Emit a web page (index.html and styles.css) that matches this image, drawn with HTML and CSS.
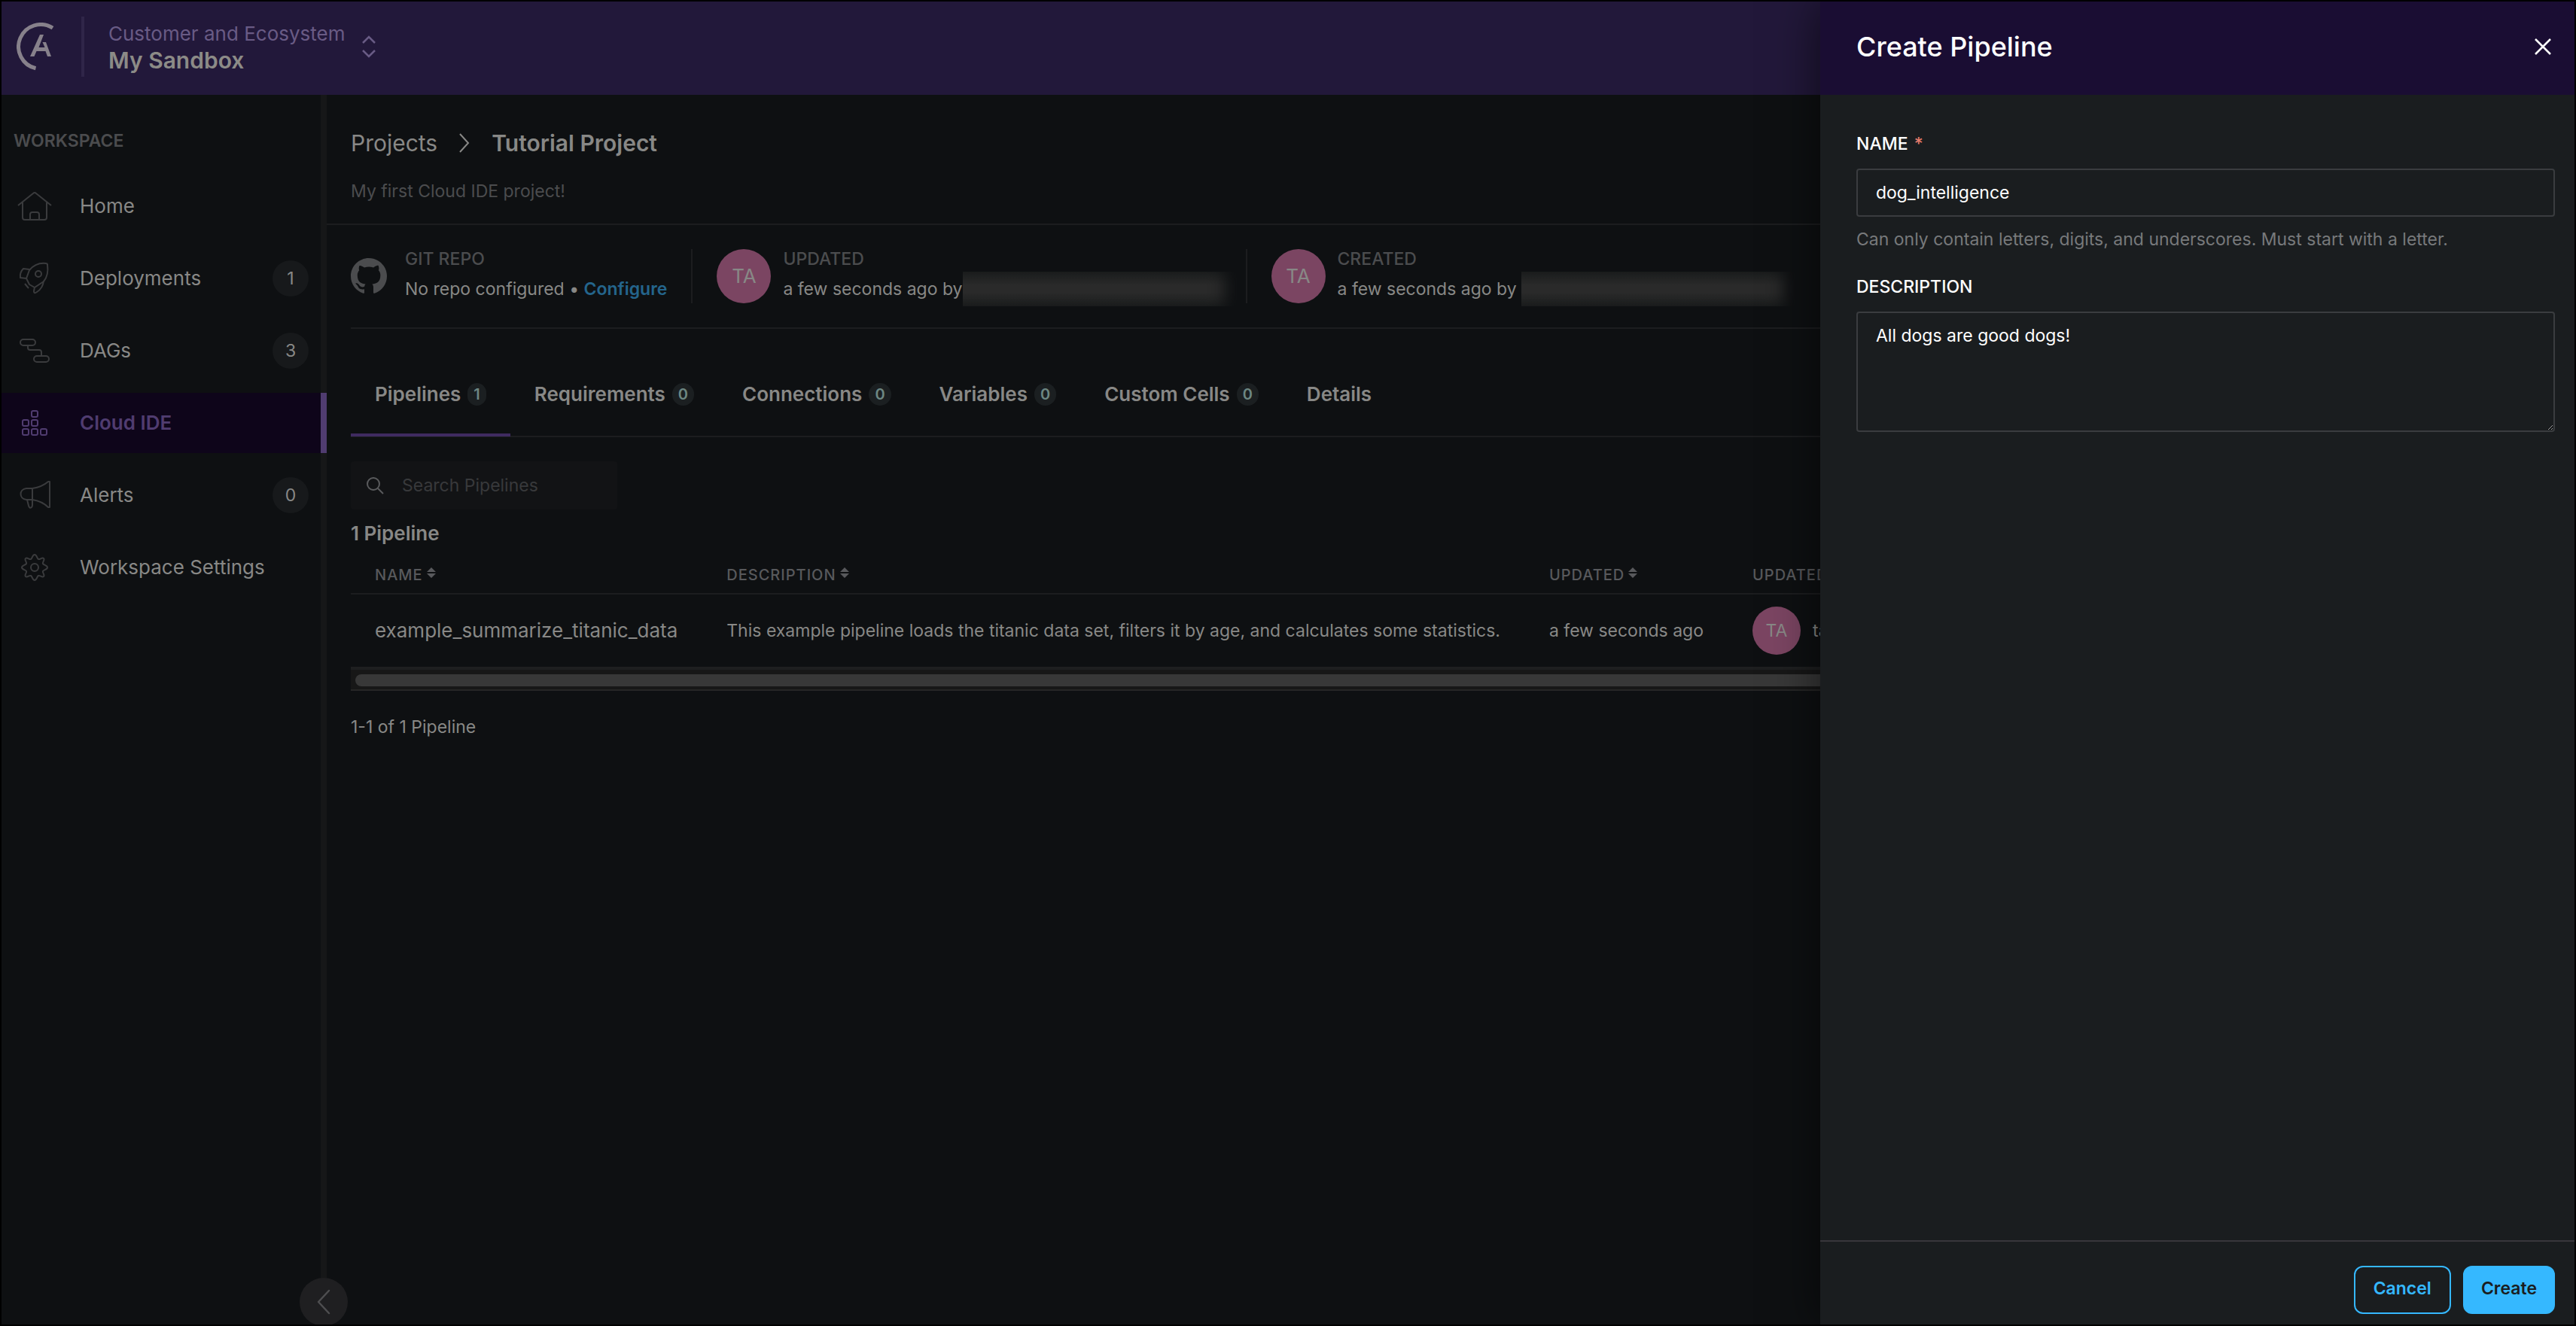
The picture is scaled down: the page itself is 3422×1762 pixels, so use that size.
FILE: index.html
```html
<!doctype html>
<html lang="en">
  <head>
    <meta charset="UTF-8" />
    <meta name="viewport" content="width=device-width, initial-scale=1.0" />
    <title>Create Pipeline - Tutorial Project</title>
    <link rel="stylesheet" href="styles.css">
  </head>
  <body>
    <div class="app">
      <header class="topbar">
        <a class="logo" href="#" aria-label="Astro">
          <svg width="50" height="64" viewBox="0 0 50 64" fill="none" stroke="currentColor">
            <path d="M48 7.2A29.5 29.5 0 1 0 25.5 60.8" stroke-width="5" />
            <path d="M18 45 31 16H36L29.5 33H37.5L34.5 26H39L46 45H41L38.5 38H26.5L23.5 45z" fill="currentColor" stroke="none" />
          </svg>
        </a>
        <button type="button" class="switcher">
          <span class="switcher-text">
            <span class="org">Customer and Ecosystem</span>
            <span class="workspace">My Sandbox</span>
          </span>
          <svg width="20" height="30" viewBox="0 0 20 30" fill="none" stroke="currentColor" stroke-width="2.5">
            <path d="M2 10 10 2 18 10M2 20 10 28 18 20" />
          </svg>
        </button>
      </header>

      <div class="columns">
        <nav class="sidebar">
          <h2 class="sidebar-title">WORKSPACE</h2>
          <a class="nav-item" href="#">
            <svg class="nav-icon" viewBox="0 0 48 48">
              <path d="M2 23 22 7q2-2 4 0L46 23M8 19v20q0 3 3 3h26q3 0 3-3V19M18 42v-7q0-3 3-3h6q3 0 3 3v7" />
            </svg>
            <span class="nav-label">Home</span>
          </a>
          <a class="nav-item" href="#">
            <svg class="nav-icon" viewBox="0 0 48 48">
              <path d="M17 32 24 36 36 28C41 22 42 13 41 6q0-2-2-2C30 3 22 7 17 13L13 24zM17 12 9 11Q4 16 5 23L13 24 17 32M24 35 23 41Q23 45 27 42 35 37 36 27M11 31 16 37" />
              <circle cx="29" cy="18" r="4" />
            </svg>
            <span class="nav-label">Deployments</span>
            <span class="nav-count">1</span>
          </a>
          <a class="nav-item" href="#">
            <svg class="nav-icon" viewBox="0 0 48 48">
              <rect x="5" y="9" width="20" height="8" rx="4" />
              <rect x="23" y="31" width="20" height="8" rx="4" />
              <path d="M15 17v3q0 3 3 3h12q3 0 3 3v5" />
            </svg>
            <span class="nav-label">DAGs</span>
            <span class="nav-count">3</span>
          </a>
          <a class="nav-item active" href="#">
            <svg class="nav-icon" viewBox="0 0 48 48">
              <rect x="20" y="8" width="8" height="8" rx="2" />
              <rect x="8" y="20" width="8" height="8" rx="2" />
              <rect x="20" y="20" width="8" height="8" rx="2" />
              <rect x="8" y="32" width="8" height="8" rx="2" />
              <rect x="20" y="32" width="8" height="8" rx="2" />
              <rect x="32" y="32" width="8" height="8" rx="2" />
            </svg>
            <span class="nav-label">Cloud IDE</span>
          </a>
          <a class="nav-item" href="#">
            <svg class="nav-icon" viewBox="0 0 48 48">
              <path d="M21 15H13C3 16 3 29 13 30H21ZM21 15Q34 13 42 6h2V40H42Q34 32 21 30M14 30 16 38q1 4 4 2 1-1 1-3V30" />
            </svg>
            <span class="nav-label">Alerts</span>
            <span class="nav-count">0</span>
          </a>
          <a class="nav-item" href="#">
            <svg class="nav-icon" viewBox="0 0 48 48">
              <path d="M24 7C27 7 27 12 29 13 31 14 34 10 36 12 38 14 34 17 35 19 36 21 41 21 41 24 41 27 36 27 35 29 34 31 38 34 36 36 34 38 31 34 29 35 27 36 27 41 24 41 21 41 21 36 19 35 17 34 14 38 12 36 10 34 14 31 13 29 12 27 7 27 7 24 7 21 12 21 13 19 14 17 10 14 12 12 14 10 17 14 19 13 21 12 21 7 24 7Z" />
              <circle cx="24" cy="24" r="5" />
            </svg>
            <span class="nav-label">Workspace Settings</span>
          </a>
        </nav>

        <main class="main">
          <div class="page-head">
            <div class="breadcrumb">
              <a href="#">Projects</a>
              <svg width="14" height="26" viewBox="0 0 14 26" fill="none" stroke="currentColor" stroke-width="2">
                <path d="M1 1 12 13 1 25" />
              </svg>
              <h1>Tutorial Project</h1>
            </div>
            <p>My first Cloud IDE project!</p>
          </div>

          <div class="content">
            <div class="stats">
              <div class="stat stat-repo">
                <svg class="github" viewBox="0 0 16 16" fill="currentColor">
                  <path d="M8 0C3.58 0 0 3.58 0 8c0 3.54 2.29 6.53 5.47 7.59.4.07.55-.17.55-.38 0-.19-.01-.82-.01-1.49-2.01.37-2.53-.49-2.69-.94-.09-.23-.48-.94-.82-1.13-.28-.15-.68-.52-.01-.53.63-.01 1.08.58 1.23.82.72 1.21 1.87.87 2.33.66.07-.52.28-.87.51-1.07-1.78-.2-3.64-.89-3.64-3.95 0-.87.31-1.59.82-2.15-.08-.2-.36-1.02.08-2.12 0 0 .67-.21 2.2.82.64-.18 1.32-.27 2-.27s1.36.09 2 .27c1.53-1.04 2.2-.82 2.2-.82.44 1.1.16 1.92.08 2.12.51.56.82 1.27.82 2.15 0 3.07-1.87 3.75-3.65 3.95.29.25.54.73.54 1.48 0 1.07-.01 1.93-.01 2.2 0 .21.15.46.55.38A8.01 8.01 0 0 0 16 8c0-4.42-3.58-8-8-8z" />
                </svg>
                <div class="stat-text">
                  <h3>GIT REPO</h3>
                  <p>No repo configured • <a href="#">Configure</a></p>
                </div>
              </div>
              <div class="stat">
                <span class="avatar">TA</span>
                <div class="stat-text">
                  <h3>UPDATED</h3>
                  <p>a few seconds ago by<span class="redacted"></span></p>
                </div>
              </div>
              <div class="stat">
                <span class="avatar">TA</span>
                <div class="stat-text">
                  <h3>CREATED</h3>
                  <p>a few seconds ago by <span class="redacted"></span></p>
                </div>
              </div>
            </div>

            <div class="tabs">
              <a class="tab active" href="#">Pipelines <span class="tab-count">1</span></a>
              <a class="tab" href="#">Requirements <span class="tab-count">0</span></a>
              <a class="tab" href="#">Connections <span class="tab-count">0</span></a>
              <a class="tab" href="#">Variables <span class="tab-count">0</span></a>
              <a class="tab" href="#">Custom Cells <span class="tab-count">0</span></a>
              <a class="tab" href="#">Details</a>
            </div>

            <label class="search">
              <svg width="24" height="24" viewBox="0 0 24 24" fill="none" stroke="currentColor" stroke-width="2">
                <circle cx="10" cy="10" r="8" />
                <path d="M16 16 23 23" />
              </svg>
              <input type="search" placeholder="Search Pipelines" aria-label="Search Pipelines" />
            </label>

            <h2 class="table-title">1 Pipeline</h2>
            <div class="table-wrap">
              <table>
                <thead>
                  <tr>
                    <th>NAME<svg class="sort" viewBox="0 0 12 14"><path d="M6 0 12 6H0zM0 8H12L6 14z" /></svg></th>
                    <th>DESCRIPTION<svg class="sort" viewBox="0 0 12 14"><path d="M6 0 12 6H0zM0 8H12L6 14z" /></svg></th>
                    <th>UPDATED<svg class="sort" viewBox="0 0 12 14"><path d="M6 0 12 6H0zM0 8H12L6 14z" /></svg></th>
                    <th>UPDATED BY</th>
                  </tr>
                </thead>
                <tbody>
                  <tr>
                    <td class="name">example_summarize_titanic_data</td>
                    <td>This example pipeline loads the titanic data set, filters it by age, and calculates some statistics.</td>
                    <td>a few seconds ago</td>
                    <td><div class="user"><span class="avatar small">TA</span>ta</div></td>
                  </tr>
                </tbody>
              </table>
            </div>
            <div class="scrollbar"><div class="thumb"></div></div>
            <p class="pagination">1-1 of 1 Pipeline</p>
          </div>
        </main>
      </div>

      <button type="button" class="collapse" aria-label="Collapse sidebar">
        <svg width="18" height="34" viewBox="0 0 18 34" fill="none" stroke="currentColor" stroke-width="2.5" stroke-linecap="round" stroke-linejoin="round">
          <path d="M16 2 2 17 16 32" />
        </svg>
      </button>

      <form class="drawer">
        <div class="drawer-head">
          <h2>Create Pipeline</h2>
          <button type="button" class="close" aria-label="Close">
            <svg width="22" height="22" viewBox="0 0 22 22" fill="none" stroke="currentColor" stroke-width="2.5">
              <path d="M1 1 21 21M21 1 1 21" />
            </svg>
          </button>
        </div>
        <div class="drawer-body">
          <label class="field-label" for="name">NAME <span class="required">*</span></label>
          <input class="field" type="text" id="name" value="dog_intelligence" />
          <p class="help">Can only contain letters, digits, and underscores. Must start with a letter.</p>
          <label class="field-label" for="description">DESCRIPTION</label>
          <textarea class="field" id="description">All dogs are good dogs!</textarea>
        </div>
        <div class="drawer-foot">
          <button type="button" class="btn">Cancel</button>
          <button type="submit" class="btn primary">Create</button>
        </div>
      </form>
    </div>
  </body>
</html>
```

FILE: styles.css
```css
* {
  box-sizing: border-box;
}

html,
body {
  margin: 0;
  height: 100%;
}

body {
  padding: 2px;
  background: #000;
  color: #888886;
  color-scheme: dark;
  font: 23px/32px Inter, sans-serif;
}

h1,
h2,
h3,
p {
  margin: 0;
  font-size: inherit;
}

a {
  color: inherit;
  text-decoration: none;
}

button,
input,
textarea {
  margin: 0;
  border: 0;
  background: none;
  color: inherit;
  font: inherit;
}

.app {
  position: relative;
  display: flex;
  flex-direction: column;
  height: 100%;
  overflow: hidden;
  background: #0e1012;
}

/* Top bar */
.topbar {
  display: flex;
  align-items: center;
  height: 124px;
  padding: 0 0 4px 20px;
  background: #22183a;
}

.logo {
  display: flex;
  padding-right: 36px;
  color: #87818b;
}

.switcher {
  display: flex;
  align-items: center;
  gap: 22px;
  height: 80px;
  padding: 0 0 0 32px;
  border-left: 4px solid #2f2548;
  color: #695b85;
}

.switcher-text {
  display: flex;
  flex-direction: column;
  text-align: left;
}

.org {
  font-size: 26px;
  line-height: 36px;
}

.workspace {
  color: #8c8b87;
  font-size: 30px;
  font-weight: 600;
  line-height: 34px;
}

/* Sidebar */
.columns {
  display: flex;
  flex: 1;
  min-height: 0;
}

.sidebar {
  display: flex;
  flex: none;
  flex-direction: column;
  gap: 16px;
  width: 432px;
  padding-top: 45px;
  border-right: 8px solid #161718;
}

.sidebar-title {
  padding: 0 16px 15px;
  color: #4b4c4e;
  font-weight: 600;
}

.nav-item {
  display: flex;
  align-items: center;
  height: 80px;
  margin-right: -8px;
  padding: 0 24px 0 20px;
  font-size: 26px;
}

.nav-item.active {
  border-right: 8px solid #503c70;
  background: #0e051a;
  color: #503c70;
  font-weight: 600;
}

.nav-icon {
  width: 48px;
  height: 48px;
  margin-right: 36px;
  fill: none;
  stroke: #3a3b3d;
  stroke-width: 2;
  stroke-linejoin: round;
}

.nav-item.active .nav-icon {
  stroke: currentColor;
}

.nav-label {
  flex: 1;
}

.nav-count {
  width: 48px;
  border-radius: 24px;
  background: #17191b;
  font-size: 23px;
  line-height: 48px;
  text-align: center;
}

.collapse {
  position: absolute;
  bottom: -2px;
  left: 396px;
  display: grid;
  place-items: center;
  width: 64px;
  height: 64px;
  padding: 0;
  border-radius: 50%;
  background: #1f1f21;
  color: #4e4e50;
}

/* Project page */
.main {
  flex: 1;
  min-width: 0;
}

.page-head {
  padding: 44px 32px 27px;
  border-bottom: 2px solid #1c1d1f;
}

.page-head p {
  margin-top: 28px;
  color: #4b4c4e;
}

.breadcrumb {
  display: flex;
  align-items: center;
  gap: 29px;
  font-size: 30px;
  line-height: 40px;
}

.breadcrumb h1 {
  font-weight: 600;
}

.content {
  padding-left: 32px;
}

.stats {
  display: flex;
  padding: 32px 0;
  border-bottom: 2px solid #1c1d1f;
}

.stat {
  display: flex;
  gap: 16px;
  padding: 0 32px;
}

.stat + .stat {
  border-left: 2px solid #1c1d1f;
}

.stat-repo {
  gap: 24px;
  padding-left: 0;
}

.stat-text {
  line-height: 26px;
}

.stat-text h3 {
  margin-bottom: 14px;
  color: #4b4c4e;
  font-weight: 500;
}

.stat-text p {
  display: flex;
  align-items: center;
  white-space: pre;
}

.stat-text a {
  color: #24658c;
  font-weight: 600;
}

.github {
  align-self: center;
  width: 48px;
  height: 48px;
  color: #4b4c4e;
}

.avatar {
  flex: none;
  width: 72px;
  border-radius: 50%;
  background: #7b4562;
  font-size: 26px;
  line-height: 72px;
  text-align: center;
}

.avatar.small {
  width: 64px;
  font-size: 23px;
  line-height: 64px;
}

.redacted {
  width: 364px;
  height: 46px;
  margin: -10px -20px -10px 0;
  background: linear-gradient(#1d1f1f, #2a2a2a 40%, #2a2a2a 60%, #1d1f1f);
  box-shadow: inset -24px 0 20px -8px #0e1012;
}

/* Tabs */
.tabs {
  display: flex;
  padding-top: 32px;
  border-bottom: 2px solid #1c1d1f;
}

.tab {
  display: flex;
  align-items: center;
  gap: 9px;
  margin-bottom: -1px;
  padding: 40px 32px 37px;
  border-bottom: 4px solid transparent;
  font-size: 26px;
  font-weight: 600;
  line-height: 30px;
}

.tab.active {
  border-color: #3f2b60;
}

.tab-count {
  padding: 0 8px;
  border-radius: 15px;
  background: #1b1f21;
  color: #6d8783;
  font-size: 20px;
}

.search {
  display: flex;
  align-items: center;
  gap: 24px;
  width: 354px;
  height: 64px;
  margin: 32px 0 16px;
  padding-left: 20px;
  border-radius: 4px;
  background: #121315;
  color: #5a5b5d;
}

.search input {
  flex: 1;
  min-width: 0;
  padding: 0;
}

.search input::placeholder {
  color: #38393b;
}

.table-title {
  font-size: 26px;
  font-weight: 600;
}

/* Pipelines table */
.table-wrap {
  overflow: hidden;
}

table {
  width: 100%;
  border-collapse: collapse;
  white-space: nowrap;
}

th {
  padding: 27px 32px 12px;
  border-bottom: 2px solid #1c1d1f;
  color: #58595c;
  font-size: 20px;
  font-weight: 500;
  letter-spacing: 1px;
  line-height: 24px;
  text-align: left;
}

th:last-child {
  width: 100%;
}

td {
  padding: 16px 33px 16px 32px;
}

td.name {
  font-size: 26px;
}

.sort {
  width: 12px;
  height: 14px;
  margin-left: 5px;
  fill: #58595c;
  vertical-align: 3px;
}

.user {
  display: flex;
  gap: 16px;
  line-height: 64px;
}

.scrollbar {
  height: 32px;
  padding: 6px;
  border-top: 4px solid #1e1f20;
  border-bottom: 2px solid #262626;
  background: #171717;
}

.thumb {
  width: 95%;
  height: 16px;
  border-radius: 8px;
  background: #383838;
}

.pagination {
  margin-top: 32px;
}

/* Drawer */
.drawer {
  position: absolute;
  top: 0;
  right: 0;
  bottom: 0;
  display: flex;
  flex-direction: column;
  width: 1002px;
  background: #1a1d1f;
  box-shadow: 0 0 60px rgba(0, 0, 0, 0.6);
  color: #fff;
}

.drawer-head {
  display: flex;
  align-items: center;
  justify-content: space-between;
  height: 124px;
  padding: 0 26px 4px 48px;
  background: #1a0d33;
}

.drawer-head h2 {
  font-size: 36px;
  font-weight: 500;
}

.close {
  display: flex;
  padding: 5px;
}

.drawer-body {
  display: flex;
  flex: 1;
  flex-direction: column;
  padding: 49px 26px 0 48px;
}

.field-label {
  margin-bottom: 17px;
  font-weight: 500;
}

.required {
  margin-left: 2px;
  color: #e57c6c;
}

.field {
  height: 64px;
  padding: 14px 24px;
  border: 2px solid #3a3c3f;
  border-radius: 4px;
}

textarea.field {
  height: 160px;
  resize: vertical;
}

.help {
  margin: 14px 0 31px;
  color: #77797b;
}

.drawer-foot {
  display: flex;
  justify-content: flex-end;
  gap: 16px;
  padding: 32px 26px 14px;
  border-top: 2px solid #38363b;
}

.btn {
  height: 64px;
  padding: 0 24px 4px;
  border: 2px solid #35b8ff;
  border-radius: 12px;
  color: #35b8ff;
  font-weight: 600;
}

.btn.primary {
  padding: 0 22px 4px;
  background: #35b8ff;
  color: #1a1d1f;
}
```
